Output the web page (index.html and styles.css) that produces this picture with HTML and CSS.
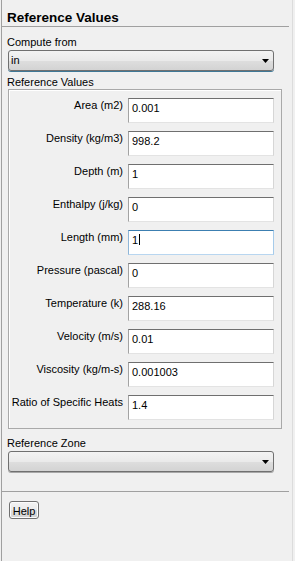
FILE: index.html
```html
<!DOCTYPE html>
<html lang="en">
<head>
    <meta charset="UTF-8">
    <meta name="viewport" content="width=device-width, initial-scale=1.0">
    <title>Reference Values</title>
    <link rel="stylesheet" href="styles.css">
</head>
<body>
    <div class="panel">
        <h1 class="title">Reference Values</h1>

        <div class="label first">Compute from</div>
        <div class="combo active">
            <span class="combo-text">in</span>
            <svg class="arrow" width="7" height="4" viewBox="0 0 7 4"><path d="M0 0H7L3.5 4Z" fill="#000"/></svg>
        </div>

        <div class="label">Reference Values</div>
        <div class="group">
            <div class="row-label">Area (m2)</div>
            <div class="field">0.001</div>
            <div class="row-label">Density (kg/m3)</div>
            <div class="field">998.2</div>
            <div class="row-label">Depth (m)</div>
            <div class="field">1</div>
            <div class="row-label">Enthalpy (j/kg)</div>
            <div class="field">0</div>
            <div class="row-label">Length (mm)</div>
            <div class="field focused">1<span class="caret"></span></div>
            <div class="row-label">Pressure (pascal)</div>
            <div class="field">0</div>
            <div class="row-label">Temperature (k)</div>
            <div class="field">288.16</div>
            <div class="row-label">Velocity (m/s)</div>
            <div class="field">0.01</div>
            <div class="row-label">Viscosity (kg/m-s)</div>
            <div class="field">0.001003</div>
            <div class="row-label">Ratio of Specific Heats</div>
            <div class="field">1.4</div>
        </div>

        <div class="label zone">Reference Zone</div>
        <div class="combo">
            <span class="combo-text"></span>
            <svg class="arrow" width="7" height="4" viewBox="0 0 7 4"><path d="M0 0H7L3.5 4Z" fill="#000"/></svg>
        </div>

        <div class="footer">
            <button class="btn">Help</button>
        </div>
    </div>
</body>
</html>
```

FILE: styles.css
```css
body {
    margin: 0;
    background: #f0f0f0;
    font-family: "Liberation Sans", Arial, sans-serif;
    font-size: 11px;
    color: #000;
}
.panel {
    box-sizing: border-box;
    width: 292px;
    height: 561px;
    margin-left: 1px;
    border-left: 1px solid #a0a0a0;
    border-right: 1px solid #dcdcdc;
}
.title {
    margin: 0 3px 0 0;
    padding: 10px 0 0 5px;
    font-size: 13.5px;
    font-weight: bold;
    line-height: 16px;
    border-bottom: 1px solid #a0a0a0;
}
.label {
    margin: 5px 0 0 5px;
    line-height: 12px;
}
.label.first {
    margin-top: 9px;
}
.label.zone {
    margin-top: 8px;
}
.combo {
    box-sizing: border-box;
    display: flex;
    align-items: center;
    width: 266px;
    height: 21px;
    margin: 2px 0 0 6px;
    padding: 0 4px 0 2px;
    border: 1px solid #707070;
    border-radius: 3px;
    background: linear-gradient(#f3f3f3, #eaeaea 50%, #dedede 51%, #d3d3d3);
    box-shadow: 0 1px 0 #a8a8a8;
}
.combo.active {
    box-shadow: 0 1px 0 #3f7896;
}
.combo-text {
    line-height: 13px;
}
.arrow {
    margin-left: auto;
}
.group {
    box-sizing: border-box;
    display: grid;
    grid-template-columns: 114px 146px;
    column-gap: 5px;
    row-gap: 8px;
    width: 274px;
    margin: 1px 0 0 6px;
    padding: 8px 7px 8px 0;
    border: 1px solid #a9a9a9;
    box-shadow: inset 1px 1px 0 #fff;
}
.row-label {
    padding-top: 1px;
    line-height: 13px;
    text-align: right;
    white-space: nowrap;
}
.field {
    box-sizing: border-box;
    height: 25px;
    padding: 3px 3px 0;
    line-height: 13px;
    background: #fff;
    border: 1px solid;
    border-color: #6f6f6f #d6d6d6 #e3e3e3 #a3a3a3;
}
.field.focused {
    border-color: #3c7fb1 #a6cbea #b8d6f0 #8fb6d8;
}
.caret {
    display: inline-block;
    width: 1px;
    height: 11px;
    margin-left: 1px;
    vertical-align: -1px;
    background: #000;
}
.footer {
    margin: 19px 3px 0 0;
    padding: 9px 0 0 7px;
    border-top: 1px solid #a0a0a0;
}
.btn {
    box-sizing: border-box;
    width: 30px;
    height: 18px;
    padding: 2px 0 0;
    font-family: inherit;
    font-size: 11px;
    line-height: 13px;
    color: #000;
    border: 1px solid #707070;
    border-radius: 3px;
    background: linear-gradient(#f3f3f3, #eaeaea 50%, #dedede 51%, #d3d3d3);
    box-shadow: inset 0 0 0 1px #fcfcfc;
}
```
